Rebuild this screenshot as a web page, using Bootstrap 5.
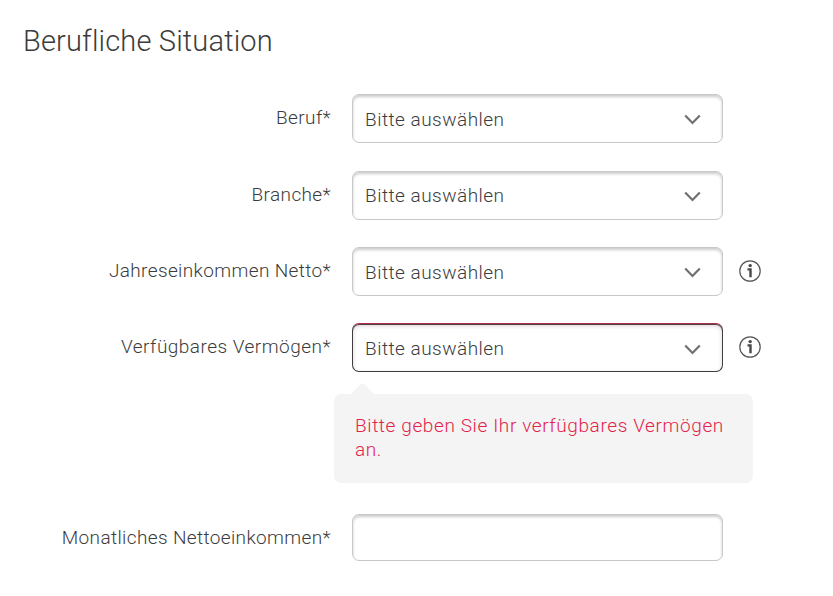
<!DOCTYPE html>
<html lang="de">
<head>
<meta charset="utf-8">
<meta name="viewport" content="width=device-width, initial-scale=1">
<title>Berufliche Situation</title>
<link rel="stylesheet" href="https://cdn.jsdelivr.net/npm/bootstrap@5.3.0/dist/css/bootstrap.min.css">
<style>
body{font-family:Roboto,"Liberation Sans",sans-serif;font-weight:300;font-size:19px;line-height:24px;color:#3c3c3c;background:#fff;overflow:hidden}
.page-form{padding:23px 0 0 23px}
.form-title{font-size:29px;font-weight:300;line-height:36px;margin-bottom:35.2px;color:#3c3c3c;letter-spacing:.16px}
.field-row{height:49px;margin-bottom:27.4px}
.field-label{width:308px;padding:0;margin:0;line-height:24px;padding-top:12px;letter-spacing:.37px}
.field-label.wide{letter-spacing:.48px}
.field-box{width:371px;height:49px;margin-left:21px;padding:2.4px 21px 0 12px;border:1px solid #c8c8c8;border-radius:7px;background:#fff;box-shadow:inset 0 2px 3px rgba(0,0,0,.2);font-weight:300;font-size:19px;color:#3c3c3c;letter-spacing:.48px}
.field-box.has-error{border-color:#403c40;border-top-color:#b02c48;box-shadow:inset 0 1px 0 #50404a,inset 0 2px 4px rgba(70,20,50,.2)}
.field-box.entry{height:47px}
.info-btn{width:22px;height:22px;margin:13px 0 0 16px}
.error-note{position:relative;width:419px;height:89px;margin:-5.4px 0 30.800px 311px;padding:20px 21px;background:#f4f4f4;border-radius:7px;color:#e4234b;letter-spacing:.61px}
.note-tip{position:absolute;left:16px;top:-11px}
</style>
</head>
<body>
<main class="page-form">
<h1 class="form-title"><span>Berufliche Situation</span></h1>
<form>
<div class="field-row d-flex">
<label class="field-label text-end"><span>Beruf*</span></label>
<div class="field-box d-flex align-items-center justify-content-between"><span>Bitte auswählen</span><svg width="17" height="11" viewBox="0 0 17 11" fill="none" stroke="#707070" stroke-width="2.200"><path d="M1.2 1.5 8.500 9l7.300-7.500"/></svg></div>
</div>
<div class="field-row d-flex">
<label class="field-label text-end"><span>Branche*</span></label>
<div class="field-box d-flex align-items-center justify-content-between"><span>Bitte auswählen</span><svg width="17" height="11" viewBox="0 0 17 11" fill="none" stroke="#707070" stroke-width="2.200"><path d="M1.2 1.5 8.500 9l7.300-7.500"/></svg></div>
</div>
<div class="field-row d-flex">
<label class="field-label text-end"><span>Jahreseinkommen Netto*</span></label>
<div class="field-box d-flex align-items-center justify-content-between"><span>Bitte auswählen</span><svg width="17" height="11" viewBox="0 0 17 11" fill="none" stroke="#707070" stroke-width="2.200"><path d="M1.2 1.5 8.500 9l7.300-7.500"/></svg></div>
<svg class="info-btn" viewBox="0 0 22 22" fill="none"><circle cx="11" cy="11" r="10.200" stroke="#555" stroke-width="1.200"/><circle cx="11.200" cy="5.600" r="1.700" fill="#484848"/><path d="M8.500 9.400h3v7.800" stroke="#484848" stroke-width="2.400"/></svg>
</div>
<div class="field-row d-flex">
<label class="field-label wide text-end"><span>Verfügbares Vermögen*</span></label>
<div class="field-box has-error d-flex align-items-center justify-content-between"><span>Bitte auswählen</span><svg width="17" height="11" viewBox="0 0 17 11" fill="none" stroke="#707070" stroke-width="2.200"><path d="M1.2 1.5 8.500 9l7.300-7.500"/></svg></div>
<svg class="info-btn" viewBox="0 0 22 22" fill="none"><circle cx="11" cy="11" r="10.200" stroke="#555" stroke-width="1.200"/><circle cx="11.200" cy="5.600" r="1.700" fill="#484848"/><path d="M8.500 9.400h3v7.800" stroke="#484848" stroke-width="2.400"/></svg>
</div>
<div class="error-note"><svg class="note-tip" width="26" height="12" viewBox="0 0 26 12"><path d="M0 12 11 1q1.500-1.500 3 0l11 11z" fill="#f4f4f4"/></svg>Bitte geben Sie Ihr verfügbares Vermögen an.</div>
<div class="field-row d-flex">
<label class="field-label text-end"><span>Monatliches Nettoeinkommen*</span></label>
<input class="field-box entry" type="text">
</div>
</form>
</main>
<script src="https://cdn.jsdelivr.net/npm/bootstrap@5.3.0/dist/js/bootstrap.bundle.min.js"></script>
</body>
</html>
